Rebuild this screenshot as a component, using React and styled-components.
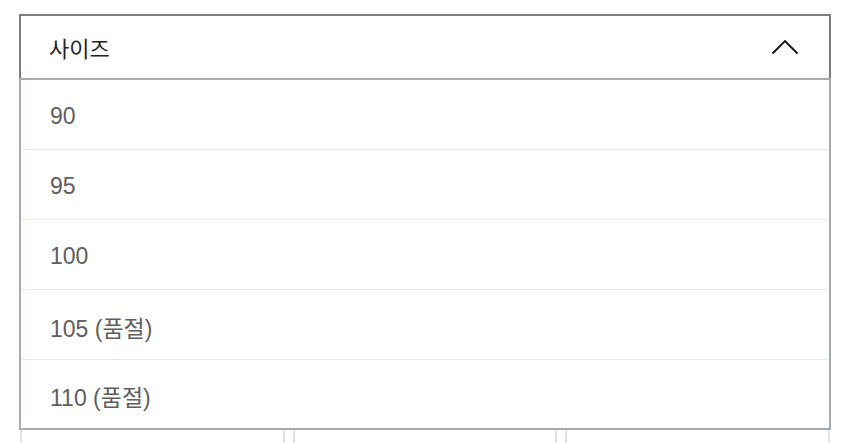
import * as React from 'react';
import styled, { createGlobalStyle } from 'styled-components';

const GlobalStyle = createGlobalStyle`
  html, body {
    margin: 0;
    padding: 0;
    background: #ffffff;
    overflow: hidden;
  }
  body {
    font-family: "Liberation Sans", "Noto Sans CJK KR", sans-serif;
  }
`;

const Page = styled.div`
  width: 850px;
  height: 443px;
  padding: 14px 19px 0 19px;
  box-sizing: border-box;
  overflow: hidden;
`;

const Dropdown = styled.div`
  display: flex;
  flex-direction: column;
`;

const Header = styled.button`
  display: flex;
  align-items: center;
  justify-content: space-between;
  height: 64px;
  padding: 0 30px 0 28px;
  box-sizing: border-box;
  border: 2px solid #7d7d7d;
  border-bottom: none;
  background: #fff;
  font-family: inherit;
  font-size: 22px;
  color: #222;
  cursor: pointer;
`;

const List = styled.ul`
  margin: 0;
  padding: 0;
  list-style: none;
  border: 2px solid #a6abb4;
`;

const Item = styled.li`
  display: flex;
  align-items: center;
  height: 70px;
  padding: 4px 0 0 29px;
  box-sizing: border-box;
  font-size: 23px;
  color: #5e5e5e;
  border-bottom: 1px solid #ececec;

  &:last-child {
    height: 68px;
    border-bottom: none;
  }
`;

const Below = styled.div`
  display: grid;
  grid-template-columns: repeat(3, 1fr);
  gap: 8px;
  padding: 0 1px;
`;

const Cell = styled.div`
  height: 40px;
  border-left: 2px solid #e4e4e4;
  border-right: 2px solid #e4e4e4;
`;

const Chevron = () => (
  <svg width="28" height="16" viewBox="0 0 28 16" fill="none">
    <polyline points="1.5,14.5 14,2 26.5,14.5" stroke="#111" strokeWidth="1.8" />
  </svg>
);

const sizes = ['90', '95', '100', '105 (품절)', '110 (품절)'];

export default function App() {
  return (
    <>
      <GlobalStyle />
      <Page>
        <Dropdown>
          <Header>
            <span>사이즈</span>
            <Chevron />
          </Header>
          <List>
            {sizes.map(s => (
              <Item key={s}>{s}</Item>
            ))}
          </List>
        </Dropdown>
        <Below>
          <Cell />
          <Cell />
          <Cell />
        </Below>
      </Page>
    </>
  );
}
